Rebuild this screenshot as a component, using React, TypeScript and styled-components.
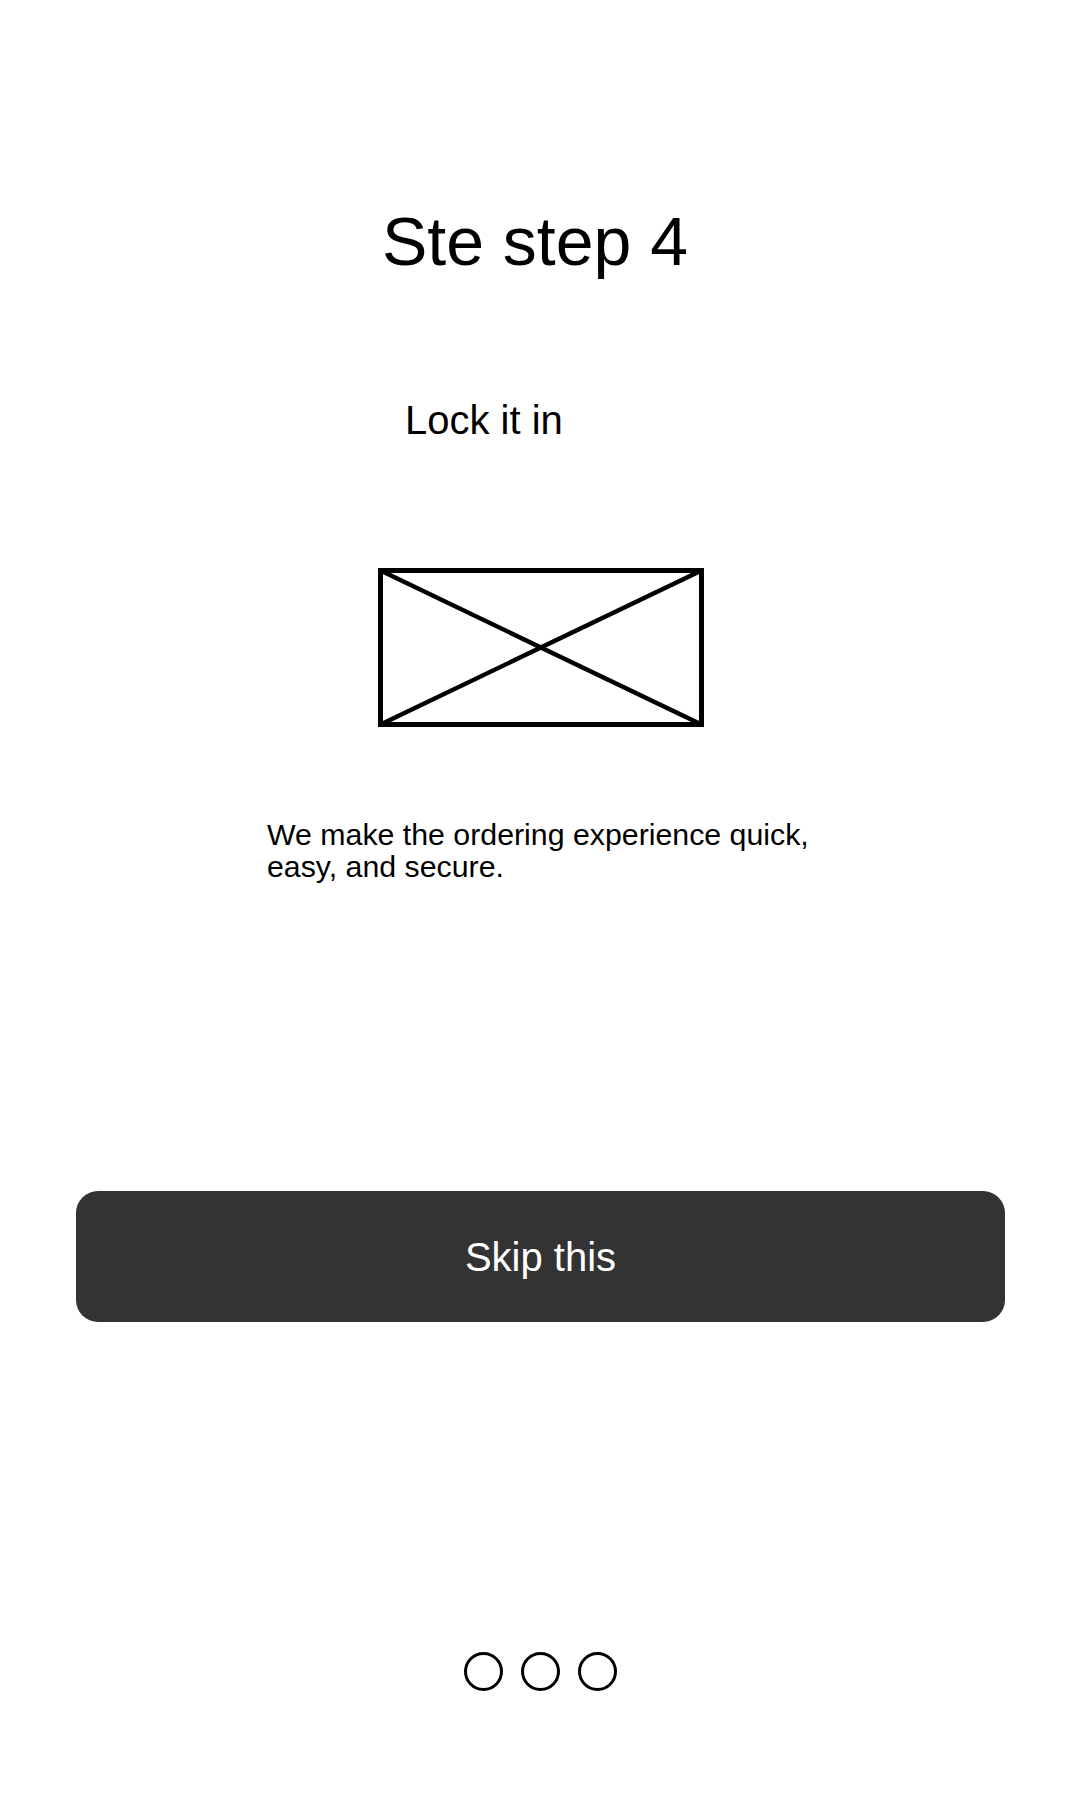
import React from "react";
import styled, { createGlobalStyle } from "styled-components";

const GlobalStyle = createGlobalStyle`
  html, body {
    margin: 0;
    padding: 0;
    background: #ffffff;
  }
  body {
    font-family: "Liberation Sans", Arial, sans-serif;
    color: #000000;
  }
`;

const Page = styled.div`
  width: 1080px;
  min-height: 1800px;
  display: flex;
  flex-direction: column;
  align-items: flex-start;
  background: #ffffff;
  font-family: "Liberation Sans", Arial, sans-serif;
`;

const Title = styled.h1`
  align-self: stretch;
  margin: 207px 0 0 0;
  padding-right: 10px;
  font-size: 68px;
  line-height: 68px;
  font-weight: 400;
  text-align: center;
  color: #000;
`;

const Subtitle = styled.h2`
  margin: 125px 0 0 405px;
  font-size: 40px;
  line-height: 40px;
  font-weight: 400;
  color: #000;
`;

const Placeholder = styled.svg`
  display: block;
  margin: 128px 0 0 378px;
`;

const Description = styled.p`
  margin: 92px 0 0 267px;
  width: 570px;
  font-size: 30.3px;
  line-height: 32px;
  color: #000;
`;

const SkipButton = styled.button`
  margin: 308px 0 0 76px;
  width: 929px;
  height: 131px;
  border: none;
  border-radius: 22px;
  background: #333333;
  color: #ffffff;
  font-family: "Liberation Sans", Arial, sans-serif;
  font-size: 40px;
  line-height: 40px;
  display: flex;
  align-items: center;
  justify-content: center;
  padding: 0;
  cursor: pointer;
`;

const Dots = styled.div`
  align-self: stretch;
  margin-top: 330px;
  display: flex;
  justify-content: center;
  gap: 18px;
`;

const Dot = styled.span<{ $active?: boolean }>`
  width: 39px;
  height: 39px;
  box-sizing: border-box;
  border-radius: 50%;
  border: 3px solid #000;
  background: ${(p) => (p.$active ? "#000" : "transparent")};
`;

export default function App() {
  return (
    <>
      <GlobalStyle />
      <Page>
        <Title>Ste step 4</Title>
        <Subtitle>Lock it in</Subtitle>
        <Placeholder width="326" height="159" viewBox="0 0 326 159">
          <rect x="2.5" y="2.5" width="321" height="154" fill="none" stroke="#000" strokeWidth="5" />
          <line x1="2.5" y1="2.5" x2="323.5" y2="156.5" stroke="#000" strokeWidth="4.5" />
          <line x1="323.5" y1="2.5" x2="2.5" y2="156.5" stroke="#000" strokeWidth="4.5" />
        </Placeholder>
        <Description>
          We make the ordering experience quick, easy, and secure.
        </Description>
        <SkipButton type="button">Skip this</SkipButton>
        <Dots>
          <Dot />
          <Dot />
          <Dot />
        </Dots>
      </Page>
    </>
  );
}
